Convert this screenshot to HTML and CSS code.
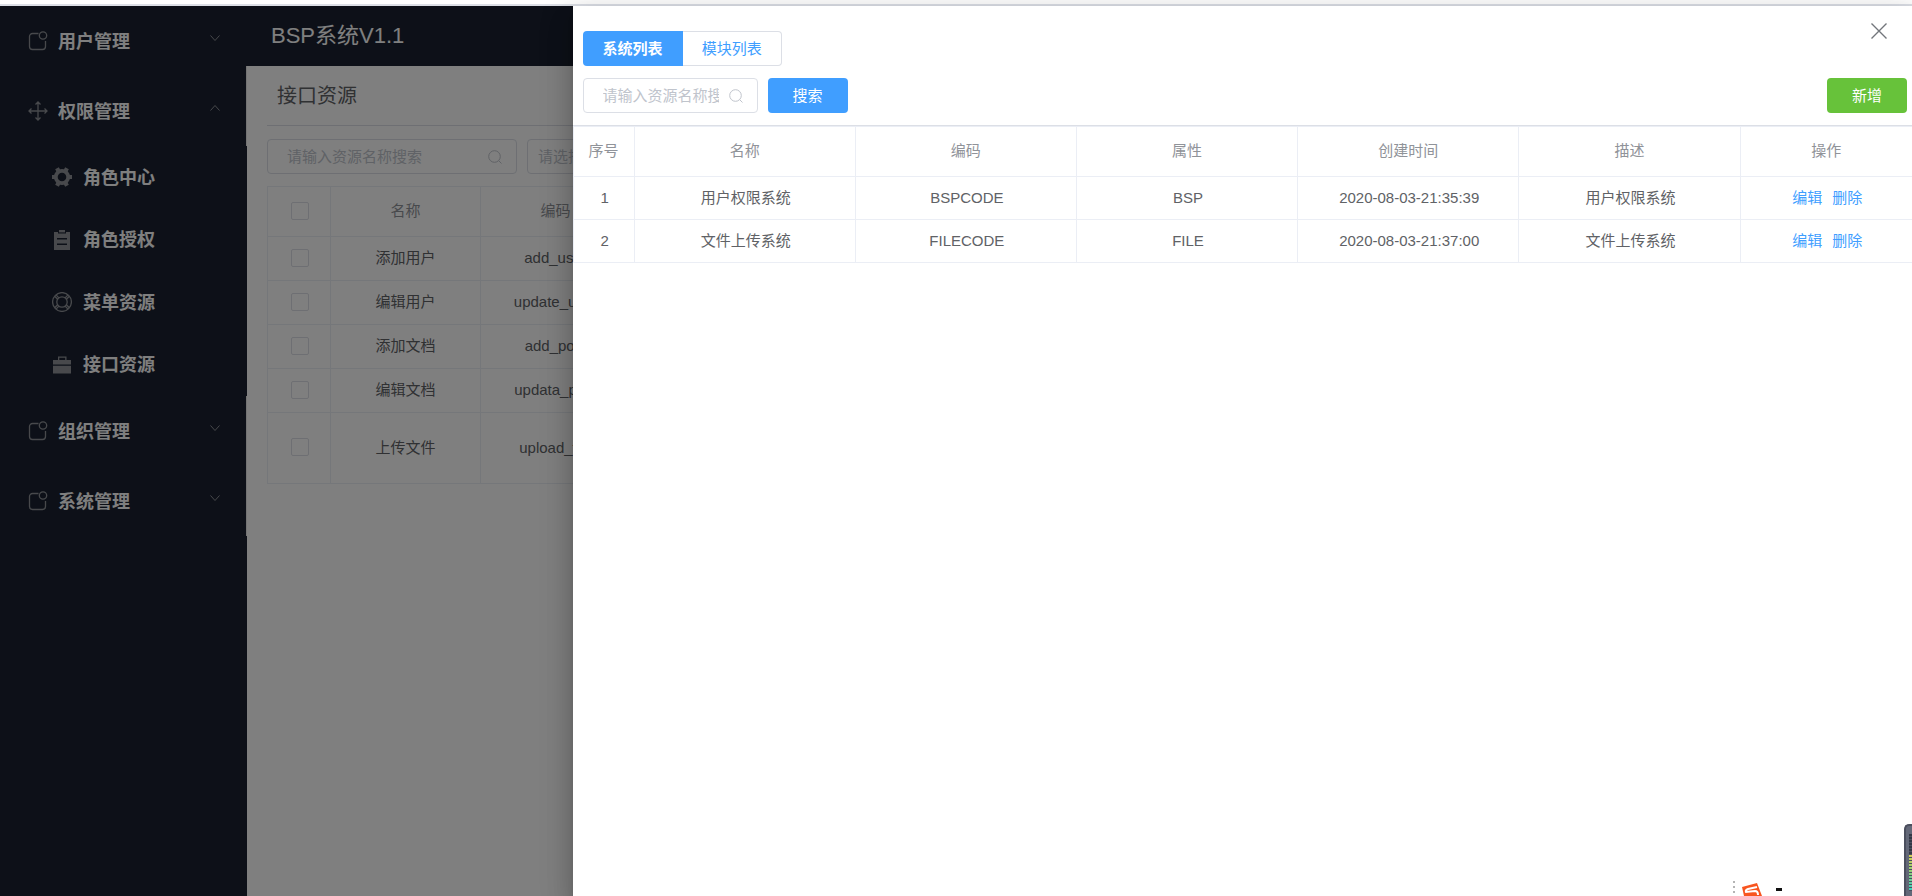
FILE: index.html
```html
<!DOCTYPE html>
<html lang="zh-CN">
<head>
<meta charset="utf-8">
<title>BSP系统V1.1</title>
<link rel="stylesheet" href="styles.css">
</head>
<body>
<svg class="defs" aria-hidden="true">
  <symbol id="i-notice" viewBox="0 0 20 20"><path d="M10.500 2.500H4.500a3 3 0 0 0-3 3v10a3 3 0 0 0 3 3h10a3 3 0 0 0 3-3V10"/><circle cx="15" cy="4.500" r="3.700"/></symbol>
  <symbol id="i-rank" viewBox="0 0 20 20"><path d="M10 1v18M1 10h18M7.500 3.500 10 1l2.500 2.500M7.500 16.500 10 19l2.500-2.500M3.500 7.500 1 10l2.500 2.500M16.500 7.500 19 10l-2.500 2.500"/></symbol>
  <symbol id="i-gear" viewBox="0 0 20 20"><circle cx="10" cy="10" r="6.200" stroke-width="3.800"/><path stroke-width="4.200" d="M0 10h3.500M16.500 10H20M5 1.300l1.700 3M15 1.300l-1.700 3M5 18.700l1.700-3M15 18.700l-1.700-3"/></symbol>
  <symbol id="i-claim" viewBox="0 0 20 20"><path fill="currentColor" stroke="none" fill-rule="evenodd" d="M2 2h4v1.500h8V2h4v18H2zM5 8v1.400h10V8zm0 5.500v1.400h10v-1.400z"/><path fill="currentColor" stroke="none" d="M7 0h6v2.400H7z"/></symbol>
  <symbol id="i-help" viewBox="0 0 20 20"><circle cx="10" cy="10" r="9.400"/><circle cx="10" cy="10" r="5.200"/><path d="m4 2.900 2.900 3M2.700 4.300l2.900 3M16 2.900l-2.900 3M17.300 4.300l-2.900 3M4 17.100l2.900-3M2.700 15.700l2.900-3M16 17.100l-2.900-3M17.300 15.700l-2.900-3"/></symbol>
  <symbol id="i-case" viewBox="0 0 20 20"><path fill="currentColor" stroke="none" fill-rule="evenodd" d="M6 1.500h8.500V5H19v4.500H1V5h5zM7.300 2.800V5h5.900V2.800zM1 10.800h18v7.700H1z"/></symbol>
  <symbol id="i-down" viewBox="0 0 10 10"><path d="m.5 2.500 4.500 5 4.500-5"/></symbol>
  <symbol id="i-up" viewBox="0 0 10 10"><path d="m.5 7.500 4.500-5 4.500 5"/></symbol>
  <symbol id="i-search" viewBox="0 0 14 14"><circle cx="6.500" cy="6.500" r="5.800"/><path d="m10.700 10.700 2.800 2.800"/></symbol>
  <symbol id="i-close" viewBox="0 0 16 16"><path d="m.5.5 15 15M15.500.5l-15 15"/></symbol>
</svg>

<div class="app">
  <nav class="sidebar">
    <a class="item" href="#"><svg class="icon"><use href="#i-notice"/></svg><span>用户管理</span><svg class="arrow"><use href="#i-down"/></svg></a>
    <a class="item" href="#"><svg class="icon"><use href="#i-rank"/></svg><span>权限管理</span><svg class="arrow"><use href="#i-up"/></svg></a>
    <div class="submenu">
      <a class="subitem" href="#"><svg class="icon"><use href="#i-gear"/></svg><span>角色中心</span></a>
      <a class="subitem" href="#"><svg class="icon"><use href="#i-claim"/></svg><span>角色授权</span></a>
      <a class="subitem" href="#"><svg class="icon"><use href="#i-help"/></svg><span>菜单资源</span></a>
      <a class="subitem" href="#"><svg class="icon"><use href="#i-case"/></svg><span>接口资源</span></a>
    </div>
    <a class="item" href="#"><svg class="icon"><use href="#i-notice"/></svg><span>组织管理</span><svg class="arrow"><use href="#i-down"/></svg></a>
    <a class="item" href="#"><svg class="icon"><use href="#i-notice"/></svg><span>系统管理</span><svg class="arrow"><use href="#i-down"/></svg></a>
  </nav>

  <div class="page">
    <header class="topbar">BSP系统V1.1</header>
    <main class="content">
      <h1 class="title">接口资源</h1>
      <div class="filters">
        <div class="search search-wide"><input type="text" placeholder="请输入资源名称搜索" aria-label="资源名称"><svg class="glass"><use href="#i-search"/></svg></div>
        <select class="picker" aria-label="请选择"><option>请选择</option></select>
      </div>
      <table class="grid grid-back">
        <colgroup><col class="c-check"><col class="c-cell"><col class="c-cell"><col></colgroup>
        <thead><tr><th><input type="checkbox" aria-label="全选"></th><th>名称</th><th>编码</th><th></th></tr></thead>
        <tbody>
          <tr><td><input type="checkbox" aria-label="添加用户"></td><td>添加用户</td><td>add_user</td><td></td></tr>
          <tr><td><input type="checkbox" aria-label="编辑用户"></td><td>编辑用户</td><td>update_user</td><td></td></tr>
          <tr><td><input type="checkbox" aria-label="添加文档"></td><td>添加文档</td><td>add_post</td><td></td></tr>
          <tr><td><input type="checkbox" aria-label="编辑文档"></td><td>编辑文档</td><td>updata_post</td><td></td></tr>
          <tr class="tall"><td><input type="checkbox" aria-label="上传文件"></td><td>上传文件</td><td>upload_file</td><td></td></tr>
        </tbody>
      </table>
    </main>
  </div>

  <div class="mask">
    <section class="drawer" role="dialog" aria-label="系统列表">
      <button class="close" type="button" aria-label="关闭"><svg><use href="#i-close"/></svg></button>
      <div class="tabs">
        <button class="tab active" type="button">系统列表</button><button class="tab" type="button">模块列表</button>
      </div>
      <div class="tools">
        <div class="search"><input type="text" placeholder="请输入资源名称搜索" aria-label="资源名称"><svg class="glass"><use href="#i-search"/></svg></div>
        <button class="btn" type="button">搜索</button>
        <button class="btn btn-add" type="button">新增</button>
      </div>
      <table class="grid grid-front">
        <colgroup><col class="c-index"><col><col><col><col><col><col class="c-ops"></colgroup>
        <thead><tr><th>序号</th><th>名称</th><th>编码</th><th>属性</th><th>创建时间</th><th>描述</th><th>操作</th></tr></thead>
        <tbody>
          <tr><td>1</td><td>用户权限系统</td><td>BSPCODE</td><td>BSP</td><td>2020-08-03-21:35:39</td><td>用户权限系统</td><td><a href="#">编辑</a><a href="#">删除</a></td></tr>
          <tr><td>2</td><td>文件上传系统</td><td>FILECODE</td><td>FILE</td><td>2020-08-03-21:37:00</td><td>文件上传系统</td><td><a href="#">编辑</a><a href="#">删除</a></td></tr>
        </tbody>
      </table>
    </section>
  </div>
</div>

<svg class="ime" viewBox="0 0 56 16" aria-hidden="true">
  <path fill="#b4b4b4" d="M1 1h2v2H1zm0 5h2v2H1zm0 5h2v2H1z"/>
  <path fill="#f8551f" d="m10 7 15-4 5 13H12z"/>
  <path fill="none" stroke="#fff" stroke-width="2" d="m25 7-9 2q-3 1-2 3l9-1q3 0 3 4"/>
  <path fill="#111" d="M44 8h6v3h-6z"/>
</svg>
<div class="meter"></div>
</body>
</html>
```
FILE: styles.css
```css
* { box-sizing: border-box; }
html, body { height: 100%; }
body {
  margin: 0;
  padding-top: 4px;
  overflow: hidden;
  background: #fff;
  color: #606266;
  font: 15px/23px "Liberation Sans", "Noto Sans CJK SC", sans-serif;
}
a { color: inherit; text-decoration: none; }
button, input, select { font: inherit; }
button { cursor: pointer; }
svg { fill: none; stroke: currentColor; }
.defs { display: none; }

.app {
  position: relative;
  display: flex;
  height: 100%;
  border-top: 2px solid #dcdfe6;
}

.sidebar { flex: none; width: 247px; background: #1a2130; color: #fff; font-size: 18px; font-weight: 700; }
.item, .subitem { display: flex; align-items: center; gap: 10px; }
.item { height: 70px; padding: 2px 26px 0 28px; border-right: 1px solid #e6e6e6; }
.submenu { display: grid; grid-template-rows: repeat(4, 1fr); height: 250px; }
.subitem { padding-left: 52px; padding-top: 2px; }
.icon { width: 20px; height: 20px; margin-bottom: 2px; color: #909399; stroke-width: 1.3; }
.subitem .icon { margin-right: 1px; }
.arrow { width: 10px; height: 10px; margin: 0 0 8px auto; color: #909399; }

.page { flex: 1; min-width: 0; }
.topbar {
  position: relative;
  height: 60px;
  margin-left: -1px;
  padding-left: 25px;
  background: #1a2130;
  color: #fff;
  font-size: 22px;
  line-height: 60px;
}
.content { padding: 0 20px; }
.title {
  height: 60px;
  margin: 0 0 13px;
  padding-left: 10px;
  border-bottom: 1px solid #dcdfe6;
  color: #606266;
  font-size: 20px;
  font-weight: 400;
  line-height: 60px;
}
.filters { display: flex; gap: 10px; margin-bottom: 12px; }

.search {
  display: flex;
  align-items: center;
  width: 175px;
  height: 35px;
  padding: 0 14px 0 19px;
  border: 1px solid #dcdfe6;
  border-radius: 4px;
  background: #fff;
}
.search-wide { width: 250px; }
.search input { flex: 1; min-width: 0; padding: 0; border: 0; outline: 0; background: none; }
.search input::placeholder { color: #c0c4cc; }
.glass { flex: none; width: 14px; height: 14px; margin-left: 10px; color: #c0c4cc; }
.picker {
  width: 200px;
  height: 35px;
  padding: 0 10px;
  border: 1px solid #dcdfe6;
  border-radius: 4px;
  background: #fff;
  color: #c0c4cc;
  appearance: none;
}

.grid { width: 100%; border-collapse: collapse; table-layout: fixed; text-align: center; }
.grid th, .grid td { padding: 0 0 2px; border: 1px solid #ebeef5; }
.grid th { height: 50px; color: #909399; font-weight: 400; }
.grid-back td { height: 44px; }
.grid-back .tall td { height: 71px; }
.c-check { width: 63px; }
.c-cell { width: 150px; }
.grid input {
  display: block;
  width: 18px;
  height: 18px;
  margin: 0 auto;
  border: 1px solid #dcdfe6;
  border-radius: 2px;
  background: #fff;
  appearance: none;
}
.grid-back tr > :first-child { padding-left: 2px; }

.mask { position: absolute; inset: 0; background: rgba(0, 0, 0, .5); }
.drawer {
  position: absolute;
  top: 0;
  right: 0;
  bottom: 0;
  width: calc(70% + 1px);
  padding-top: 25px;
  background: #fff;
  box-shadow: 0 8px 10px -5px rgba(0, 0, 0, .2), 0 16px 24px 2px rgba(0, 0, 0, .14), 0 6px 30px 5px rgba(0, 0, 0, .12);
}
.close { position: absolute; top: 17px; right: 25px; padding: 0; border: 0; background: none; color: #72767b; line-height: 0; }
.close svg { width: 16px; height: 16px; stroke-width: 1.4; }
.tabs { display: flex; margin: 0 10px 12px; }
.tab { height: 35px; padding: 0 19px; border: 1px solid #dcdfe6; border-left: 0; border-radius: 0 4px 4px 0; background: #fff; color: #409eff; }
.tab.active { padding: 0 20px; border: 0; border-radius: 4px 0 0 4px; background: #409eff; color: #fff; font-weight: 700; }
.tools { display: flex; gap: 10px; padding: 0 5px 12px 10px; border-bottom: 1px solid #dcdfe6; }
.btn { width: 80px; height: 35px; padding: 0; border: 0; border-radius: 4px; background: #409eff; color: #fff; }
.btn-add { margin-left: auto; background: #67c23a; }
.grid-front td { height: 43px; padding-left: 2px; }
.grid-front tr > :last-child { border-right: 0; }
.c-index { width: 61px; }
.c-ops { width: 172px; }
.grid a { color: #409eff; }
.grid a + a { margin-left: 10px; }

.ime { position: fixed; right: 124px; bottom: 0; width: 56px; height: 16px; stroke: none; }
.meter {
  position: fixed;
  right: 0;
  bottom: 0;
  width: 8px;
  height: 72px;
  border: 2px solid #4b4f5e;
  border-width: 2px 0 0 2px;
  border-radius: 5px 0 0 0;
  background:
    repeating-linear-gradient(transparent 0 2px, #4a5060 2px 3px) right 8px / 3px 57px no-repeat,
    linear-gradient(#333846 0 20px, #d8cf4e 20px, #8fcf7a 38px, #38d0c0 57px) right 8px / 3px 57px no-repeat,
    #636878;
}
```
